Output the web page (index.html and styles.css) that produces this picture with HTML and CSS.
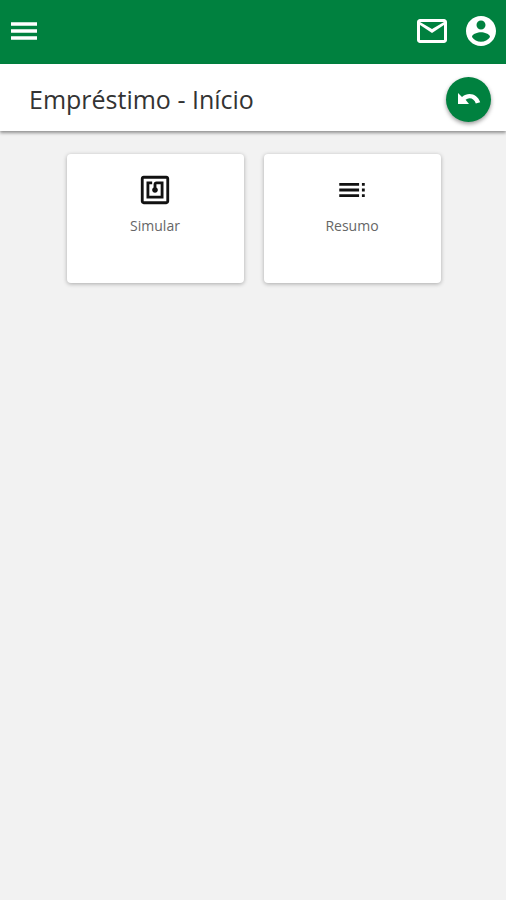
FILE: index.html
```html
<!DOCTYPE html>
<html lang="pt-BR">
<head>
<meta charset="utf-8">
<meta name="viewport" content="width=device-width, initial-scale=1">
<title>Empréstimo - Início</title>
<link rel="stylesheet" href="styles.css">
</head>
<body>
<header class="topbar">
  <button class="icon-button" type="button" aria-label="Menu">
    <svg class="icon" viewBox="0 0 36 36"><path d="M5 9.300h26v3.500H5zM5 16.300h26v3.500H5zM5 23.300h26v3.500H5z"/></svg>
  </button>
  <div class="actions">
    <button class="icon-button" type="button" aria-label="Mensagens">
      <svg class="icon" viewBox="0 0 24 24"><path d="M20 4H4c-1.100 0-2 .9-2 2v12c0 1.100.9 2 2 2h16c1.100 0 2-.9 2-2V6c0-1.100-.9-2-2-2zm0 14H4V8l8 5.300L20 8v10zm-8-7.300L4 6h16l-8 4.700z"/></svg>
    </button>
    <button class="icon-button" type="button" aria-label="Conta">
      <svg class="icon" viewBox="0 0 24 24"><path d="M12 2C6.480 2 2 6.480 2 12s4.480 10 10 10 10-4.480 10-10S17.520 2 12 2zm0 3c1.660 0 3 1.340 3 3s-1.340 3-3 3-3-1.340-3-3 1.340-3 3-3zm0 14.200c-2.500 0-4.710-1.280-6-3.220.030-1.990 4-3.080 6-3.080 1.990 0 5.970 1.090 6 3.080-1.290 1.940-3.500 3.220-6 3.220z"/></svg>
    </button>
  </div>
</header>
<div class="titlebar">
  <h1 class="title">Empréstimo - Início</h1>
  <button class="back" type="button" aria-label="Voltar">
    <svg class="back-icon" viewBox="0 0 26 26"><path d="M2 7l4 4C8.500 8.800 11 8 13.500 8c5 0 9 3.200 10.700 8.200l-4.400 1.300c-1-3.200-3.300-5.200-6.300-5.200-1.400 0-2.700.5-3.900 1.500L13 18H2z"/></svg>
  </button>
</div>
<main class="cards">
  <a class="card" href="#simular">
    <svg class="card-icon" viewBox="0 0 24 24"><path d="M20 2H4c-1.100 0-2 .9-2 2v16c0 1.100.9 2 2 2h16c1.100 0 2-.9 2-2V4c0-1.100-.9-2-2-2zm0 18H4V4h16v16zM18 6h-5c-1.100 0-2 .9-2 2v2.280c-.6.350-1 .980-1 1.720 0 1.100.9 2 2 2s2-.9 2-2c0-.740-.4-1.380-1-1.720V8h3v8H8V8h2V6H6v12h12V6z"/></svg>
    <span class="card-label">Simular</span>
  </a>
  <a class="card" href="#resumo">
    <svg class="card-icon" viewBox="0 0 24 24"><path d="M3 9h14V7H3v2zm0 4h14v-2H3v2zm0 4h14v-2H3v2zm16 0h2v-2h-2v2zm0-10v2h2V7h-2zm0 6h2v-2h-2v2z"/></svg>
    <span class="card-label">Resumo</span>
  </a>
</main>
</body>
</html>
```
FILE: styles.css
```css
* {
  box-sizing: border-box;
}

body {
  margin: 0;
  min-height: 100vh;
  background: #f2f2f2;
  color: #333;
  font-family: "Open Sans", "Noto Sans", sans-serif;
}

button {
  border: 0;
  padding: 0;
  cursor: pointer;
}

svg {
  display: block;
  fill: currentColor;
}

.topbar {
  display: flex;
  align-items: center;
  justify-content: space-between;
  height: 64px;
  padding: 0 7px 2px 6px;
  background: #00813f;
}

.actions {
  display: flex;
  gap: 13px;
}

.icon-button {
  background: none;
  color: #fff;
}

.icon {
  width: 36px;
  height: 36px;
}

.titlebar {
  display: flex;
  align-items: center;
  justify-content: space-between;
  height: 67px;
  padding: 3px 15px 0 29px;
  background: #fff;
  box-shadow: 0 2px 3px rgba(0, 0, 0, 0.4);
}

.title {
  margin: 0;
  font-size: 25px;
  font-weight: 400;
  line-height: 32px;
}

.back {
  display: grid;
  place-items: center;
  width: 45px;
  height: 45px;
  border-radius: 50%;
  background: #00813f;
  color: #fff;
  box-shadow: 0 2px 4px rgba(0, 0, 0, 0.4);
}

.back-icon {
  width: 26px;
  height: 26px;
}

.cards {
  display: flex;
  flex-wrap: wrap;
  justify-content: center;
  gap: 20px;
  padding: 23px 15px 23px 16px;
}

.card {
  display: flex;
  flex-direction: column;
  align-items: center;
  gap: 9px;
  width: 177px;
  min-height: 129px;
  padding: 19px 8px;
  border-radius: 4px;
  background: #fff;
  color: #111;
  text-decoration: none;
  box-shadow: 0 1px 4px rgba(0, 0, 0, 0.3);
}

.card-icon {
  width: 34px;
  height: 34px;
}

.card-label {
  color: #666;
  font-size: 14px;
  line-height: 20px;
}
```
